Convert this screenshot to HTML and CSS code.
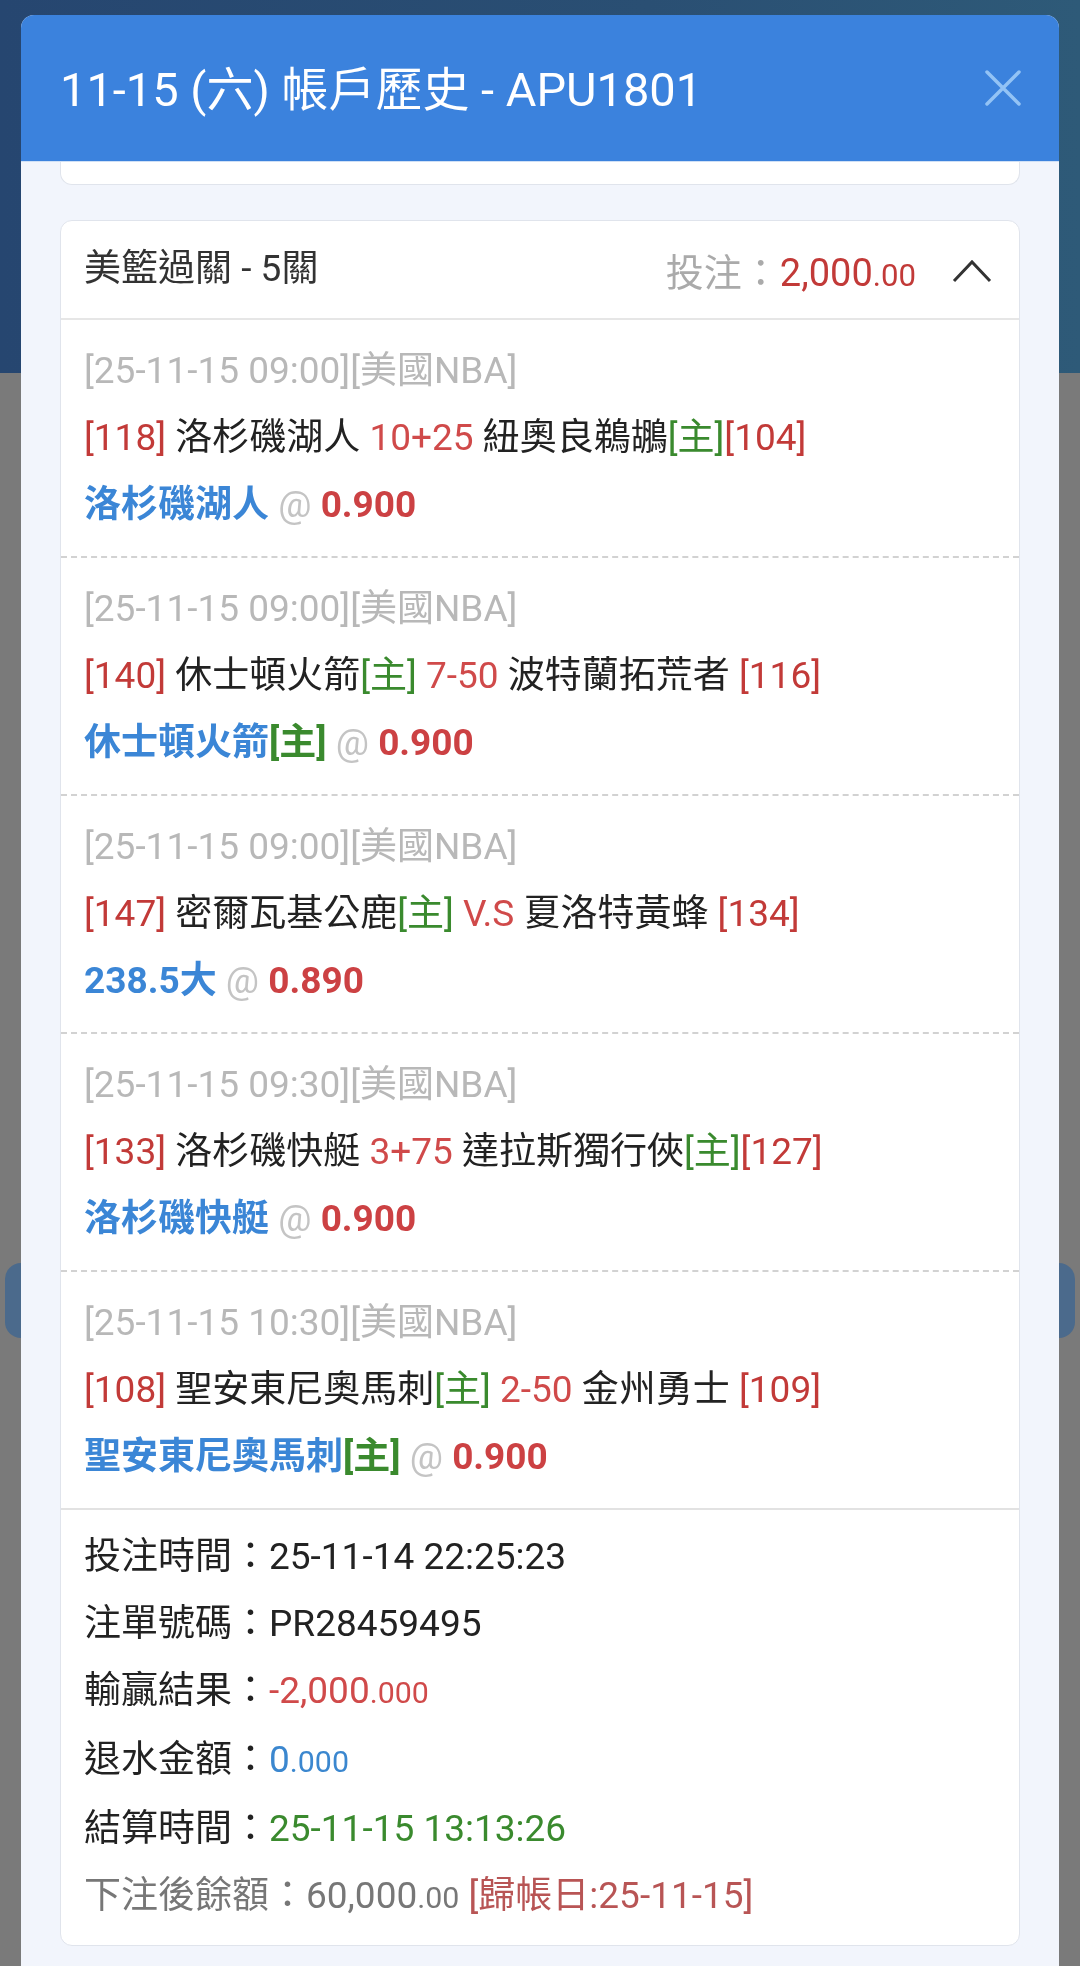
FILE: index.html
```html
<!DOCTYPE html>
<html lang="zh-Hant">
<head>
    <meta charset="UTF-8">
    <meta name="viewport" content="width=device-width, initial-scale=1.0">
    <title>帳戶歷史</title>
    <link rel="stylesheet" href="styles.css">
</head>
<body>
    <!-- page behind the dialog -->
    <div class="page">
        <div class="page-top"></div>
        <div class="page-btn"></div>
    </div>

    <div class="overlay">
        <div class="modal">
            <div class="modal-head">
                <h2 class="modal-title">11-15 (六) 帳戶歷史 - APU1801</h2>
                <button class="close-btn" type="button">
                    <svg width="38" height="38" viewBox="0 0 38 38">
                        <path d="M3 3 L35 35 M35 3 L3 35" stroke="#93c3f5" stroke-width="3.5" stroke-linecap="round" fill="none"/>
                    </svg>
                </button>
            </div>

            <div class="modal-body">
                <div class="card card-stub"></div>

                <div class="card">
                    <div class="card-head">
                        <span class="bet-type">美籃過關 - 5關</span>
                        <span class="bet-amount"><span class="label">投注：</span><span class="red">2,000<span class="dec">.00</span></span></span>
                        <svg class="chevron" width="40" height="24" viewBox="0 0 40 24">
                            <path d="M2 22 L20 3 L38 22" stroke="#333" stroke-width="3" fill="none"/>
                        </svg>
                    </div>

                    <div class="leg">
                        <div class="leg-date">[25-11-15 09:00][美國NBA]</div>
                        <div><span class="red">[118]</span> 洛杉磯湖人 <span class="red-lt">10+25</span> 紐奧良鵜鶘<span class="green">[主]</span><span class="red">[104]</span></div>
                        <div class="leg-pick"><span class="pick">洛杉磯湖人</span> <span class="at">@</span> <span class="odds">0.900</span></div>
                    </div>

                    <div class="leg">
                        <div class="leg-date">[25-11-15 09:00][美國NBA]</div>
                        <div><span class="red">[140]</span> 休士頓火箭<span class="green">[主]</span> <span class="red-lt">7-50</span> 波特蘭拓荒者 <span class="red">[116]</span></div>
                        <div class="leg-pick"><span class="pick">休士頓火箭</span><span class="green">[主]</span> <span class="at">@</span> <span class="odds">0.900</span></div>
                    </div>

                    <div class="leg">
                        <div class="leg-date">[25-11-15 09:00][美國NBA]</div>
                        <div><span class="red">[147]</span> 密爾瓦基公鹿<span class="green">[主]</span> <span class="red-lt">V.S</span> 夏洛特黃蜂 <span class="red">[134]</span></div>
                        <div class="leg-pick"><span class="pick">238.5大</span> <span class="at">@</span> <span class="odds">0.890</span></div>
                    </div>

                    <div class="leg">
                        <div class="leg-date">[25-11-15 09:30][美國NBA]</div>
                        <div><span class="red">[133]</span> 洛杉磯快艇 <span class="red-lt">3+75</span> 達拉斯獨行俠<span class="green">[主]</span><span class="red">[127]</span></div>
                        <div class="leg-pick"><span class="pick">洛杉磯快艇</span> <span class="at">@</span> <span class="odds">0.900</span></div>
                    </div>

                    <div class="leg leg-last">
                        <div class="leg-date">[25-11-15 10:30][美國NBA]</div>
                        <div><span class="red">[108]</span> 聖安東尼奧馬刺<span class="green">[主]</span> <span class="red-lt">2-50</span> 金州勇士 <span class="red">[109]</span></div>
                        <div class="leg-pick"><span class="pick">聖安東尼奧馬刺</span><span class="green">[主]</span> <span class="at">@</span> <span class="odds">0.900</span></div>
                    </div>

                    <div class="summary">
                        <div>投注時間：25-11-14 22:25:23</div>
                        <div>注單號碼：PR28459495</div>
                        <div>輸贏結果：<span class="red-lt">-2,000<span class="dec">.000</span></span></div>
                        <div>退水金額：<span class="blue">0<span class="dec">.000</span></span></div>
                        <div>結算時間：<span class="green">25-11-15 13:13:26</span></div>
                        <div class="balance">下注後餘額：60,000<span class="dec">.00</span> <span class="due">[歸帳日:25-11-15]</span></div>
                    </div>
                </div>
            </div>
        </div>
    </div>
</body>
</html>
```

FILE: styles.css
```css
body {
    margin: 0;
    background-color: #7a7a7a;
    font-family: Roboto, "Noto Sans CJK TC", sans-serif;
    overflow: hidden;
}
.page {
    height: 1966px;
}
.page-top {
    height: 373px;
    background: linear-gradient(90deg, #264670 0%, #2a4f73 60%, #2e5a78 100%);
}
.page-btn {
    margin: 890px 5px 0;
    height: 75px;
    border-radius: 16px;
    background-color: #4b6a8c;
}
.overlay {
    position: fixed;
    top: 0;
    left: 0;
    right: 0;
    bottom: 0;
    padding: 15px 21px 0;
}
.modal {
    height: 100%;
    background-color: #f2f5fc;
    border-radius: 13px 13px 0 0;
    overflow: hidden;
}
.modal-head {
    height: 146px;
    display: flex;
    align-items: center;
    justify-content: space-between;
    padding: 0 37px 0 39px;
    background-color: #3b82dd;
    border-bottom: 1px solid #cfe0f6;
}
.modal-title {
    margin: 0 0 6px;
    color: #fff;
    font-size: 47px;
    font-weight: 400;
}
.close-btn {
    background: none;
    border: none;
    padding: 0;
    width: 38px;
    height: 38px;
    cursor: pointer;
}
.modal-body {
    padding: 0 39px;
}
.card {
    background-color: #fff;
    border: 1px solid #e0e4ec;
    border-radius: 12px;
    font-size: 37px;
    color: #222;
}
.card-stub {
    height: 22px;
    border-top: none;
    border-radius: 0 0 12px 12px;
    margin-bottom: 35px;
}
.card-head {
    height: 97px;
    display: flex;
    align-items: center;
    padding: 0 27px 0 23px;
    border-bottom: 2px solid #e6e6e6;
}
.bet-type {
    margin-bottom: 10px;
    color: #333;
}
.bet-amount {
    margin-left: auto;
    margin-right: 36px;
    font-size: 38px;
}
.label {
    color: #aaa;
}
.chevron {
    margin-top: 2px;
}
.leg {
    padding: 17px 23px 18px;
    line-height: 67px;
    border-bottom: 2px dashed #d2d2d2;
}
.leg-last {
    border-bottom: 2px solid #e2e2e2;
}
.leg-date {
    color: #b8b8b8;
}
.leg-pick {
    font-weight: 700;
}
.pick {
    color: #3b86d6;
}
.at {
    color: #c4c4c4;
    font-weight: 400;
}
.odds {
    color: #cc4143;
}
.red {
    color: #c23a38;
}
.red-lt {
    color: #d04a4a;
}
.green {
    color: #3a8a2e;
}
.blue {
    color: #3b87cf;
}
.dec {
    font-size: 0.82em;
}
.summary {
    padding: 13px 23px 14px;
    line-height: 67px;
}
.balance {
    color: #777;
}
.due {
    color: #b85555;
}
```
